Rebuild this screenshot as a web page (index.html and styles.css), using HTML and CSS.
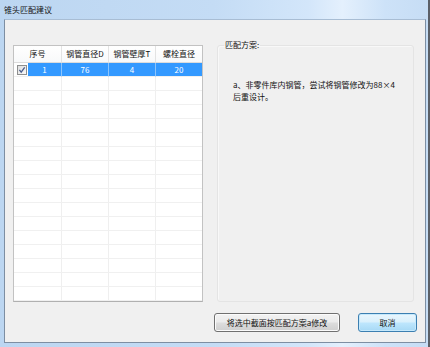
FILE: index.html
```html
<!DOCTYPE html>
<html lang="zh-CN">
<head>
<meta charset="utf-8">
<title>锥头匹配建议</title>
<link rel="stylesheet" href="styles.css">
</head>
<body>
<div class="window">
  <div class="titlebar"><span class="title">锥头匹配建议</span></div>
  <div class="client">
    <div class="main">
      <div class="grid">
        <table>
          <colgroup><col class="c1"><col class="c2"><col class="c3"><col class="c4"></colgroup>
          <thead>
            <tr><th>序号</th><th>钢管直径D</th><th>钢管壁厚T</th><th>螺栓直径</th></tr>
          </thead>
          <tbody>
            <tr class="sel">
              <td class="first">
                <span class="chk"><svg width="10" height="10" viewBox="0 0 10 10"><defs><linearGradient id="cg" x1="0" y1="0" x2="1" y2="1"><stop offset="0" stop-color="#dcdcdc"/><stop offset="1" stop-color="#fbfbfb"/></linearGradient></defs><rect x="0.5" y="0.5" width="9" height="9" fill="url(#cg)" stroke="#8e8f8f"/><path d="M2.4 4.8 L4.2 7.2 L7.7 2.4" fill="none" stroke="#4a5d8c" stroke-width="1.3"/></svg></span>
                <span class="idx">1</span>
              </td>
              <td>76</td><td>4</td><td>20</td>
            </tr>
            <tr><td></td><td></td><td></td><td></td></tr>
            <tr><td></td><td></td><td></td><td></td></tr>
            <tr><td></td><td></td><td></td><td></td></tr>
            <tr><td></td><td></td><td></td><td></td></tr>
            <tr><td></td><td></td><td></td><td></td></tr>
            <tr><td></td><td></td><td></td><td></td></tr>
            <tr><td></td><td></td><td></td><td></td></tr>
            <tr><td></td><td></td><td></td><td></td></tr>
            <tr><td></td><td></td><td></td><td></td></tr>
            <tr><td></td><td></td><td></td><td></td></tr>
            <tr><td></td><td></td><td></td><td></td></tr>
            <tr><td></td><td></td><td></td><td></td></tr>
            <tr><td></td><td></td><td></td><td></td></tr>
            <tr><td></td><td></td><td></td><td></td></tr>
            <tr><td></td><td></td><td></td><td></td></tr>
            <tr><td></td><td></td><td></td><td></td></tr>
          </tbody>
        </table>
      </div>
      <fieldset class="group">
        <legend>匹配方案:</legend>
        <p class="plan">a、非零件库内钢管，尝试将钢管修改为88×4<br>后重设计。</p>
      </fieldset>
    </div>
    <div class="buttons">
      <button class="btn wide">将选中截面按匹配方案a修改</button>
      <button class="btn default">取消</button>
    </div>
  </div>
</div>
</body>
</html>
```

FILE: styles.css
```css
html, body {
  margin: 0;
  padding: 0;
  background: #ffffff;
}

body {
  font-family: "Noto Sans CJK SC", "Noto Sans", sans-serif;
  font-size: 8px;
  color: #111;
}

.window {
  width: 430px;
  height: 347px;
  box-sizing: border-box;
  display: flex;
  flex-direction: column;
  padding: 0 2px 4px 4px;
  background: linear-gradient(to right, #bcd6f1 0%, #c4dcf5 50%, #d3e6fa 72%, #e4f0fd 80%, #cde2f8 90%, #c6ddf5 100%);
  border-right: 2px solid #5b6068;
}

.titlebar {
  height: 19px;
  display: flex;
  align-items: center;
  flex: none;
}

.title {
  line-height: 12px;
  padding-top: 1px;
}

.client {
  flex: 1;
  display: flex;
  flex-direction: column;
  background: #f0f0f0;
  border: 1px solid #7d8ea2;
  border-top-color: #a8bdd4;
  padding: 19px 8px 10px 8px;
  min-height: 0;
}

.main {
  display: flex;
  gap: 14px;
  align-items: flex-start;
}

.grid {
  width: 190px;
  height: 257px;
  box-sizing: border-box;
  margin-top: 6px;
  background: #fff;
  border: 1px solid #c2c2c2;
  border-bottom-color: #b0b0b0;
  overflow: hidden;
  flex: none;
}

table {
  width: 188px;
  border-collapse: separate;
  border-spacing: 0;
  table-layout: fixed;
}

col.c1 { width: 48px; }
col.c2 { width: 47px; }
col.c3 { width: 47px; }
col.c4 { width: 46px; }

th {
  height: 16px;
  padding: 0;
  font-weight: normal;
  text-align: center;
  background: linear-gradient(#ffffff, #f8f9fa);
  border-right: 1px solid #e3e3e3;
  border-bottom: 1px solid #dcdcdc;
  line-height: 16px;
  white-space: nowrap;
}

td {
  height: 13px;
  padding: 0;
  text-align: center;
  border-right: 1px solid #efefef;
  border-bottom: 1px solid #f0f0f0;
  line-height: 13px;
}

th:last-child, td:last-child {
  border-right: none;
}

tr.sel td {
  background: #3399ff;
  color: #fff;
  border-right-color: #8cc4fb;
  border-bottom-color: #f0f0f0;
}

tr.sel td.first {
  background: #fff;
  border-right-color: #8cc4fb;
}

td.first {
  text-align: left;
}

tr.sel td.first {
  display: flex;
  align-items: center;
  padding-left: 3px;
  gap: 1px;
}

.chk {
  width: 10px;
  height: 10px;
  display: block;
  flex: none;
}

.chk svg {
  display: block;
}

.idx {
  flex: 1;
  text-align: center;
  background: #3399ff;
  height: 13px;
}

.group {
  flex: 1;
  margin: 0 3px 0 0;
  padding: 0 6px;
  height: 263px;
  box-sizing: border-box;
  border: 1px solid #e4e4e4;
  border-radius: 3px;
  box-shadow: inset 1px 1px 0 #f8f8f8;
  min-width: 0;
}

.group legend {
  padding: 0 1px;
  line-height: 12px;
}

.plan {
  margin: 28px 0 0 9px;
  line-height: 12px;
}

.buttons {
  display: flex;
  justify-content: flex-end;
  gap: 18px;
  margin-top: 11px;
}

.btn {
  height: 19px;
  box-sizing: border-box;
  font-family: "Noto Sans CJK SC", "Noto Sans", sans-serif;
  font-size: 8px;
  color: #111;
  padding: 0;
  border: 1px solid #707070;
  border-radius: 3px;
  background: linear-gradient(#f2f2f2 0%, #ebebeb 48%, #dddddd 52%, #cfcfcf 100%);
  box-shadow: inset 0 0 0 1px #fbfbfb;
  line-height: 17px;
}

.btn.wide {
  width: 126px;
}

.btn.default {
  width: 59px;
  border-color: #3c7fb1;
  background: linear-gradient(#eaf6fd 0%, #d9f0fc 48%, #bee6fd 52%, #a7d9f5 100%);
  box-shadow: inset 0 0 0 1px #c6e9fc;
}
```
